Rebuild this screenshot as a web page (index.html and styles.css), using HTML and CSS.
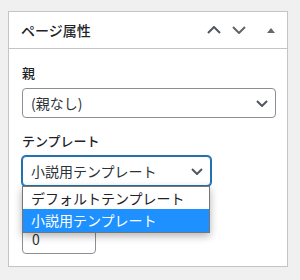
FILE: index.html
```html
<!DOCTYPE html>
<html lang="ja">
<head>
<meta charset="utf-8">
<link rel="stylesheet" href="styles.css">
</head>
<body>
<div class="page">
  <div class="panel">
    <div class="panel-header">
      <h2 class="panel-title">ページ属性</h2>
      <div class="handles">
        <svg class="chev up" width="14" height="8" viewBox="0 0 14 8"><polyline points="1,7 7,1 13,7" fill="none" stroke="#50575e" stroke-width="2"/></svg>
        <svg class="chev down" width="14" height="8" viewBox="0 0 14 8"><polyline points="1,1 7,7 13,1" fill="none" stroke="#6a625e" stroke-width="2"/></svg>
        <svg class="tri" width="8" height="5" viewBox="0 0 8 5"><polygon points="0,5 4,0 8,5" fill="#646970"/></svg>
      </div>
    </div>
    <div class="inside">
      <p class="field-label label-parent">親</p>
      <div class="select select-parent">
        <span class="select-value">(親なし)</span>
        <svg class="select-arrow" width="12" height="7" viewBox="0 0 12 7"><polyline points="1,1 6,6 11,1" fill="none" stroke="#50575e" stroke-width="2"/></svg>
      </div>
      <p class="field-label label-template">テンプレート</p>
      <div class="template-wrap">
        <div class="select select-template is-focused">
          <span class="select-value">小説用テンプレート</span>
          <svg class="select-arrow" width="12" height="7" viewBox="0 0 12 7"><polyline points="1,1 6,6 11,1" fill="none" stroke="#50575e" stroke-width="2"/></svg>
        </div>
        <ul class="dropdown">
          <li class="option">デフォルトテンプレート</li>
          <li class="option is-selected">小説用テンプレート</li>
        </ul>
      </div>
      <p class="field-label label-order">順序</p>
      <div class="number-input">0</div>
    </div>
  </div>
</div>
</body>
</html>
```

FILE: styles.css
```css
* { box-sizing: border-box; }
html, body {
  margin: 0;
  padding: 0;
  background: #f0f0f1;
  font-family: "Noto Sans CJK JP", "Noto Sans", sans-serif;
  color: #1d2327;
}
.page {
  padding: 11px 0 0 8px;
}
.panel {
  width: 280px;
  background: #fff;
  border: 1px solid #c3c4c7;
}
.panel-header {
  display: flex;
  align-items: center;
  height: 37px;
  border-bottom: 1px solid #c3c4c7;
}
.panel-title {
  margin: 0 0 0 12px;
  font-size: 14px;
  font-weight: 500;
  line-height: 20px;
  color: #1d2327;
}
.handles {
  margin-left: auto;
  margin-right: 12px;
  display: flex;
  align-items: center;
}
.chev { display: block; }
.chev.down { margin-left: 11px; }
.tri { display: block; margin-left: 21px; }
.inside {
  padding: 15px 11px 12px 13px;
  display: flex;
  flex-direction: column;
  align-items: flex-start;
}
.field-label {
  margin: 0;
  font-size: 13px;
  font-weight: 500;
  line-height: 18px;
  color: #1d2327;
}
.label-template { margin-top: 14px; }
.label-order { margin-top: 14px; }
.select {
  margin-top: 6px;
  height: 30px;
  border: 1px solid #8c8f94;
  border-radius: 4px;
  background: #fff;
  display: flex;
  align-items: center;
  padding: 0 7px 0 8px;
  font-size: 14px;
  color: #2c3338;
}
.select-parent { width: 254px; }
.select-value { line-height: 20px; }
.select-arrow { margin-left: auto; display: block; }
.template-wrap {
  position: relative;
  margin-top: 6px;
}
.select-template {
  margin-top: 0;
  width: 189px;
}
.select.is-focused {
  border-color: #2271b1;
  box-shadow: 0 0 0 1px #2271b1;
}
.dropdown {
  position: absolute;
  left: 0;
  top: 30px;
  width: 188px;
  margin: 0;
  padding: 0;
  list-style: none;
  background: #fff;
  border: 1px solid #767676;
  box-shadow: 0 3px 8px rgba(0, 0, 0, 0.3);
  z-index: 2;
}
.option {
  height: 22px;
  line-height: 22px;
  padding-left: 8px;
  font-size: 14px;
  color: #1d2327;
  white-space: nowrap;
}
.option + .option { height: 23px; line-height: 23px; }
.option.is-selected {
  background: #1e90ff;
  color: #fff;
}
.number-input {
  margin-top: 6px;
  width: 74px;
  height: 30px;
  border: 1px solid #8c8f94;
  border-radius: 4px;
  padding: 0 9px;
  font-size: 14px;
  line-height: 28px;
  color: #2c3338;
}
```
